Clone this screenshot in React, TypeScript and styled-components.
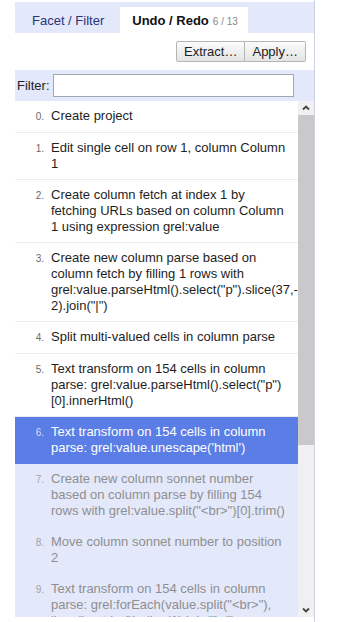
import React from "react";
import styled, { createGlobalStyle, css } from "styled-components";

const GlobalStyle = createGlobalStyle`
  html, body {
    margin: 0;
    padding: 0;
    background: #ffffff;
  }
  body {
    font-family: "Liberation Sans", Arial, sans-serif;
    font-size: 13px;
    color: #222222;
  }
`;

const LAVENDER = "#e3e8fb";

type Status = "done" | "current" | "future";

type HistoryEntry = {
  id: number;
  lines: string[];
  status: Status;
};

const entries: HistoryEntry[] = [
  { id: 0, status: "done", lines: ["Create project"] },
  { id: 1, status: "done", lines: ["Edit single cell on row 1, column Column", "1"] },
  {
    id: 2,
    status: "done",
    lines: [
      "Create column fetch at index 1 by",
      "fetching URLs based on column Column",
      "1 using expression grel:value",
    ],
  },
  {
    id: 3,
    status: "done",
    lines: [
      "Create new column parse based on",
      "column fetch by filling 1 rows with",
      'grel:value.parseHtml().select("p").slice(37,-',
      '2).join("|")',
    ],
  },
  { id: 4, status: "done", lines: ["Split multi-valued cells in column parse"] },
  {
    id: 5,
    status: "done",
    lines: [
      "Text transform on 154 cells in column",
      'parse: grel:value.parseHtml().select("p")',
      "[0].innerHtml()",
    ],
  },
  {
    id: 6,
    status: "current",
    lines: ["Text transform on 154 cells in column", "parse: grel:value.unescape('html')"],
  },
  {
    id: 7,
    status: "future",
    lines: [
      "Create new column sonnet number",
      "based on column parse by filling 154",
      'rows with grel:value.split("<br>")[0].trim()',
    ],
  },
  { id: 8, status: "future", lines: ["Move column sonnet number to position", "2"] },
  {
    id: 9,
    status: "future",
    lines: [
      "Text transform on 154 cells in column",
      'parse: grel:forEach(value.split("<br>"),',
      'line, line.trim()).slice(1).join("\\n")',
    ],
  },
];

const Panel = styled.div`
  margin-left: 15px;
  width: 300px;
  height: 622px;
  box-sizing: border-box;
  padding-top: 2px;
  border-right: 1px solid #ccd2e6;
  display: flex;
  flex-direction: column;
`;

const TabBar = styled.div`
  height: 31px;
  background: ${LAVENDER};
  display: flex;
  align-items: flex-end;
`;

const Tab = styled.div<{ $active?: boolean }>`
  height: 26px;
  display: flex;
  align-items: center;
  box-sizing: border-box;
  white-space: nowrap;
  ${({ $active }) =>
    $active
      ? css`
          background: #ffffff;
          padding: 0 10px 0 12px;
          font-weight: bold;
          color: #111111;
        `
      : css`
          padding: 0 16px 0 17px;
          color: #27367a;
        `}
`;

const TabCount = styled.span`
  font-size: 10px;
  font-weight: normal;
  color: #888888;
  margin-left: 4px;
  padding-top: 2px;
`;

const ButtonRow = styled.div`
  height: 37px;
  box-sizing: border-box;
  padding: 8px 8px 0 0;
  display: flex;
  justify-content: flex-end;
  align-items: flex-start;
`;

const ToolButton = styled.button<{ $first?: boolean }>`
  height: 21px;
  padding: 0 7px;
  font-family: "Liberation Sans", Arial, sans-serif;
  font-size: 13px;
  color: #222222;
  background: linear-gradient(#fbfbfb, #e4e4e4);
  border: 1px solid #b5b5b5;
  border-radius: ${({ $first }) => ($first ? "2px 0 0 2px" : "0 2px 2px 0")};
  ${({ $first }) => !$first && "border-left: none;"}
  cursor: pointer;
`;

const FilterRow = styled.div`
  height: 31px;
  box-sizing: border-box;
  background: ${LAVENDER};
  padding: 4px 20px 0 2px;
  display: flex;
  align-items: flex-start;
  gap: 3px;
`;

const FilterLabel = styled.label`
  line-height: 23px;
  color: #222222;
`;

const FilterInput = styled.input`
  flex: 1;
  height: 23px;
  box-sizing: border-box;
  border: 1px solid #a3a8b3;
  background: #ffffff;
  padding: 0 3px;
  margin: 0;
  font-family: "Liberation Sans", Arial, sans-serif;
  font-size: 13px;
`;

const ListArea = styled.div`
  height: 516px;
  display: flex;
  overflow: hidden;
`;

const HistoryList = styled.div`
  flex: 1;
  overflow: hidden;
`;

const statusStyles: Record<Status, ReturnType<typeof css>> = {
  done: css`
    background: #ffffff;
    color: #1e1e1e;
    border-bottom: 1px solid #ececec;
  `,
  current: css`
    background: #5a7de6;
    color: #ffffff;
    border-bottom: 1px solid #5a7de6;
  `,
  future: css`
    background: ${LAVENDER};
    color: #8f8f8f;
    border-bottom: 1px solid ${LAVENDER};
  `,
};

const Entry = styled.div<{ $status: Status }>`
  display: flex;
  align-items: baseline;
  padding: 7px 0;
  line-height: 16px;
  ${({ $status }) => statusStyles[$status]}
`;

const EntryIndex = styled.span<{ $status: Status }>`
  width: 36px;
  text-align: right;
  padding-right: 7px;
  box-sizing: border-box;
  font-size: 10px;
  flex: none;
  color: ${({ $status }) =>
    $status === "current" ? "#d6def8" : $status === "future" ? "#a2a2a2" : "#6a6a6a"};
`;

const EntryText = styled.div`
  white-space: nowrap;
`;

const EntryLine = styled.div``;

const Scrollbar = styled.div`
  width: 16px;
  background: #f0f0f2;
  display: flex;
  flex-direction: column;
`;

const ScrollArrow = styled.div`
  height: 14px;
  display: flex;
  align-items: center;
  justify-content: center;
`;

const ScrollThumb = styled.div`
  height: 330px;
  background: #c9c9cb;
`;

const ScrollSpacer = styled.div`
  flex: 1;
`;

const Chevron = ({ down }: { down?: boolean }) => (
  <svg width="8" height="6" viewBox="0 0 8 6">
    <path
      d={down ? "M1 1.5 L4 4.5 L7 1.5" : "M1 4.5 L4 1.5 L7 4.5"}
      fill="none"
      stroke="#444"
      strokeWidth="1.8"
    />
  </svg>
);

export default function App() {
  return (
    <>
      <GlobalStyle />
      <Panel>
        <TabBar>
          <Tab>Facet / Filter</Tab>
          <Tab $active>
            Undo / Redo<TabCount>6 / 13</TabCount>
          </Tab>
        </TabBar>
        <ButtonRow>
          <ToolButton $first>Extract…</ToolButton>
          <ToolButton>Apply…</ToolButton>
        </ButtonRow>
        <FilterRow>
          <FilterLabel htmlFor="history-filter">Filter:</FilterLabel>
          <FilterInput id="history-filter" type="text" />
        </FilterRow>
        <ListArea>
          <HistoryList>
            {entries.map((entry) => (
              <Entry key={entry.id} $status={entry.status}>
                <EntryIndex $status={entry.status}>{entry.id}.</EntryIndex>
                <EntryText>
                  {entry.lines.map((line, i) => (
                    <EntryLine key={i}>{line}</EntryLine>
                  ))}
                </EntryText>
              </Entry>
            ))}
          </HistoryList>
          <Scrollbar>
            <ScrollArrow>
              <Chevron />
            </ScrollArrow>
            <ScrollThumb />
            <ScrollSpacer />
            <ScrollArrow>
              <Chevron down />
            </ScrollArrow>
          </Scrollbar>
        </ListArea>
      </Panel>
    </>
  );
}
